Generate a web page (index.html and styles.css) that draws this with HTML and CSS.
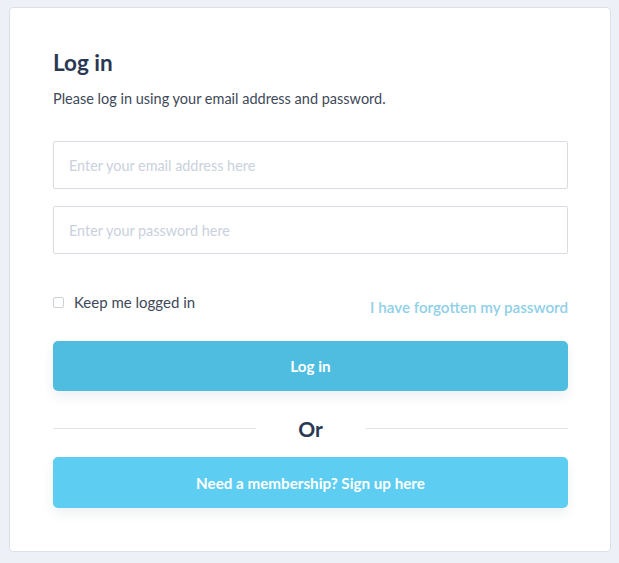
FILE: index.html
```html
<!DOCTYPE html>
<html lang="en">
<head>
  <meta charset="UTF-8">
  <title>Log in</title>
  <meta name="viewport" content="width=device-width, initial-scale=1.0">
  <link rel="stylesheet" href="styles.css">
</head>
<body>

  <div class="login-card">
    <h2>Log in</h2>
    <p class="intro">Please log in using your email address and password.</p>

    <input type="email" class="field" placeholder="Enter your email address here" />
    <input type="password" class="field" placeholder="Enter your password here" />

    <div class="options">
      <label class="remember">
        <span class="box"></span>
        Keep me logged in
      </label>
      <a href="#" class="forgot">I have forgotten my password</a>
    </div>

    <button class="btn btn-login">Log in</button>

    <div class="divider">
      <span class="line"></span>
      <span class="or">Or</span>
      <span class="line"></span>
    </div>

    <button class="btn btn-signup">Need a membership? Sign up here</button>
  </div>

</body>
</html>
```

FILE: styles.css
```css
body {
  margin: 0;
  padding: 7px 8px 11px 9px;
  background-color: #edf1f7;
  font-family: Lato, "Noto Sans", sans-serif;
}
.login-card {
  background: white;
  border: 1px solid #dbe0e8;
  border-radius: 4px;
  padding: 43px 42px 43px 43px;
}
h2 {
  margin: 0;
  font-size: 22.5px;
  line-height: 24px;
  font-weight: 700;
  color: #2a3853;
}
.intro {
  margin: 15px 0 0;
  font-size: 14.5px;
  line-height: 18px;
  color: #3e4858;
}
.field {
  display: block;
  box-sizing: border-box;
  width: 100%;
  height: 48px;
  margin-top: 17px;
  padding: 0 15px;
  border: 1px solid #d9dde3;
  border-radius: 2px;
  font-family: inherit;
  font-size: 14.4px;
  color: #3e4858;
}
.field:first-of-type {
  margin-top: 33px;
}
.field::placeholder {
  color: #c9d1dd;
}
.options {
  display: flex;
  justify-content: space-between;
  align-items: flex-start;
  margin-top: 39px;
  height: 31px;
}
.remember {
  display: flex;
  align-items: center;
  gap: 10px;
  font-size: 15px;
  line-height: 18px;
  color: #3e4858;
}
.box {
  width: 9px;
  height: 9px;
  border: 1px solid #ccd1d8;
  border-radius: 2px;
}
.forgot {
  margin-top: 5px;
  font-size: 15.2px;
  line-height: 18px;
  font-weight: 600;
  color: #8fcfe8;
  text-decoration: none;
}
.btn {
  display: block;
  width: 100%;
  height: 50px;
  border: none;
  border-radius: 5px;
  color: white;
  font-family: inherit;
  font-size: 15.2px;
  font-weight: 700;
  box-shadow: 0 6px 12px rgba(40, 60, 90, 0.08);
}
.btn-login {
  margin-top: 17px;
  background: #4ebddf;
}
.btn-signup {
  background: #5dcdf2;
  height: 51px;
}
.divider {
  display: flex;
  align-items: center;
  margin: 24px 0 16px;
  height: 26px;
}
.line {
  flex: 1;
  height: 1px;
  background: #dfe2e7;
}
.or {
  width: 110px;
  text-align: center;
  font-size: 21px;
  font-weight: 700;
  color: #2a3853;
}
```
